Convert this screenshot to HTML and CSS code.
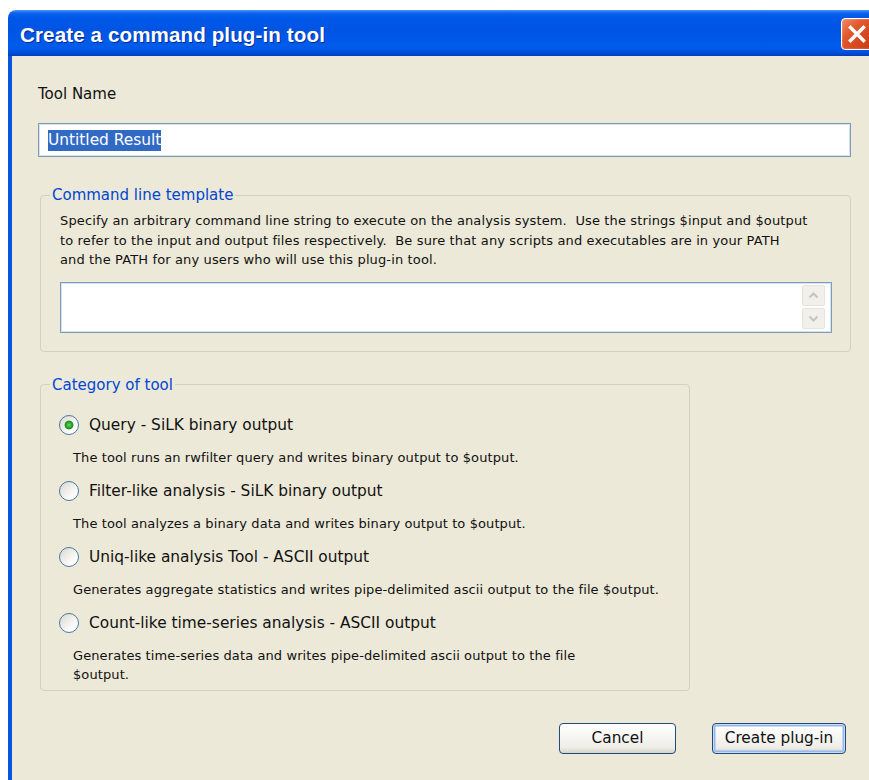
FILE: index.html
```html
<!DOCTYPE html>
<html lang="en">
<head>
<meta charset="utf-8">
<title>Create a command plug-in tool</title>
<link rel="stylesheet" href="styles.css">
</head>
<body>
<div class="window">
  <div class="titlebar">
    <span class="title">Create a command plug-in tool</span>
    <span class="close" aria-label="Close">
      <svg width="30" height="30" viewBox="0 0 30 30"><path d="M8.5 8.5 L21.5 21.5 M21.5 8.5 L8.5 21.5" stroke="#fff" stroke-width="3.4" stroke-linecap="square" fill="none"/></svg>
    </span>
  </div>

  <div class="content">
    <label class="label">Tool Name</label>
    <div class="input"><span class="sel">Untitled Result</span></div>

    <fieldset class="group group-cmd">
      <legend>Command line template</legend>
      <div class="group-body cmd-body">
        <p class="note">Specify an arbitrary command line string to execute on the analysis system.&nbsp; Use the strings $input and $output<br>to refer to the input and output files respectively.&nbsp; Be sure that any scripts and executables are in your PATH<br>and the PATH for any users who will use this plug-in tool.</p>
        <div class="textarea">
          <div class="ta-field"></div>
          <div class="scroll">
            <span class="sbtn"><svg width="11" height="7" viewBox="0 0 11 7"><path d="M1.5 5.5 L5.5 1.5 L9.5 5.5" stroke="#C6C5BC" stroke-width="2" fill="none"/></svg></span>
            <span class="sbtn"><svg width="11" height="7" viewBox="0 0 11 7"><path d="M1.5 1.5 L5.5 5.5 L9.5 1.5" stroke="#C6C5BC" stroke-width="2" fill="none"/></svg></span>
          </div>
        </div>
      </div>
    </fieldset>

    <fieldset class="group group-cat">
      <legend>Category of tool</legend>
      <div class="group-body cat-body">
        <div class="option">
          <div class="opt-row"><span class="radio checked"></span><span class="opt-label">Query - SiLK binary output</span></div>
          <p class="opt-desc">The tool runs an rwfilter query and writes binary output to $output.</p>
        </div>
        <div class="option">
          <div class="opt-row"><span class="radio"></span><span class="opt-label">Filter-like analysis - SiLK binary output</span></div>
          <p class="opt-desc">The tool analyzes a binary data and writes binary output to $output.</p>
        </div>
        <div class="option">
          <div class="opt-row"><span class="radio"></span><span class="opt-label">Uniq-like analysis Tool - ASCII output</span></div>
          <p class="opt-desc">Generates aggregate statistics and writes pipe-delimited ascii output to the file $output.</p>
        </div>
        <div class="option">
          <div class="opt-row"><span class="radio"></span><span class="opt-label">Count-like time-series analysis - ASCII output</span></div>
          <p class="opt-desc multi">Generates time-series data and writes pipe-delimited ascii output to the file<br>$output.</p>
        </div>
      </div>
    </fieldset>

    <div class="buttons">
      <button class="btn btn-cancel" type="button">Cancel</button>
      <button class="btn btn-create default" type="button">Create plug-in</button>
    </div>
  </div>
</div>
</body>
</html>
```

FILE: styles.css
```css
html, body {
  margin: 0;
  padding: 0;
  background: #ffffff;
  height: 780px;
  overflow: hidden;
}

body {
  font-family: "DejaVu Sans", "Liberation Sans", sans-serif;
  color: #111;
}

/* window frame */
.window {
  margin: 10px 0 0 8px;
  width: 869px;
  height: 770px;
  display: flex;
  flex-direction: column;
  border-radius: 8px 8px 0 0;
  overflow: hidden;
}

.titlebar {
  height: 46px;
  flex: none;
  display: flex;
  align-items: center;
  padding: 0 4px 0 12px;
  background: linear-gradient(to bottom,
    #4A96F8 0px, #0D63EE 3px, #0058E8 7px, #0054E3 20px,
    #0058E8 30px, #005CEC 36px, #0055E3 41px, #0047CF 44px, #003DBA 46px);
}

.title {
  font-family: "Liberation Sans", Arial, sans-serif;
  font-weight: bold;
  font-size: 20.6px;
  color: #fff;
  padding-top: 3px;
  text-shadow: 1px 1px 0 #0B2A8E;
  letter-spacing: 0.1px;
}

.close {
  margin-left: auto;
  margin-top: 2px;
  width: 32px;
  height: 32px;
  box-sizing: border-box;
  border: 1px solid #fff;
  border-radius: 4px;
  display: flex;
  align-items: center;
  justify-content: center;
  background: linear-gradient(135deg, #EE8A66 0%, #E2582F 35%, #D8481F 65%, #C23A15 100%);
  box-shadow: inset 0 0 2px rgba(255, 255, 255, 0.5);
}

.content {
  flex: 1;
  background: #ECE9D8;
  border-left: 4px solid #0856E0;
  padding: 28px 26px 0 26px;
}

.label {
  display: block;
  font-size: 15px;
  line-height: 20px;
}

.input {
  margin-top: 19px;
  height: 34px;
  box-sizing: border-box;
  border: 1px solid #7F9DB9;
  box-shadow: inset 0 0 0 1px #D7E1EE;
  background: #fff;
  padding-left: 9px;
  display: flex;
  align-items: center;
}

.sel {
  background: #316AC5;
  color: #fff;
  font-size: 15.4px;
  line-height: 21px;
}

/* group boxes */
.group {
  margin: 0 0 0 2px;
  padding: 0;
  border: 1px solid #D3D0C0;
  border-radius: 4px;
  min-width: 0;
}

.group legend {
  margin-left: 9px;
  padding: 0 2px;
  font-size: 15px;
  line-height: 20px;
  color: #0046D5;
}

.group-cmd {
  margin-top: 28px;
}

.cmd-body {
  padding: 6px 18px 18px 19px;
}

.note {
  margin: 0;
  font-size: 13px;
  letter-spacing: 0.13px;
  line-height: 19.5px;
  white-space: nowrap;
}

.textarea {
  margin-top: 12px;
  height: 51px;
  box-sizing: border-box;
  border: 1px solid #7F9DB9;
  box-shadow: inset 0 0 0 1px #D7E1EE;
  background: #fff;
  display: flex;
}

.ta-field {
  flex: 1;
}

.scroll {
  display: flex;
  flex-direction: column;
  gap: 2px;
  padding: 2px 6px 2px 0;
}

.sbtn {
  width: 23px;
  height: 21px;
  box-sizing: border-box;
  border: 1px solid #E6E4DC;
  border-radius: 2px;
  background: #F1F0EA;
  display: flex;
  align-items: center;
  justify-content: center;
}

.group-cat {
  margin-top: 23px;
  width: 650px;
  box-sizing: border-box;
}

.cat-body {
  padding: 18px 18px 5px 18px;
  display: flex;
  flex-direction: column;
  gap: 11px;
}

.opt-row {
  height: 24px;
  display: flex;
  align-items: center;
  gap: 10px;
}

.radio {
  width: 20px;
  height: 20px;
  box-sizing: border-box;
  border-radius: 50%;
  border: 1.5px solid #4A78A6;
  background: linear-gradient(135deg, #D9D7CE 0%, #F2F1EC 50%, #FFFFFF 80%);
  flex: none;
}

.radio.checked {
  background:
    radial-gradient(circle at 50% 50%, #6FDC6F 0, #2DA82D 2.5px, #1E8E1E 4px, rgba(30, 142, 30, 0) 4.8px),
    linear-gradient(135deg, #D9D7CE 0%, #F2F1EC 50%, #FFFFFF 80%);
}

.opt-label {
  font-size: 15.4px;
  line-height: 20px;
  white-space: nowrap;
}

.opt-desc {
  margin: 11px 0 0 14px;
  font-size: 13px;
  letter-spacing: 0.1px;
  line-height: 20px;
  white-space: nowrap;
}

.opt-desc.multi {
  line-height: 19.5px;
}

/* dialog buttons */
.buttons {
  margin-top: 32px;
  display: flex;
  justify-content: flex-end;
  gap: 36px;
  padding-right: 5px;
}

.btn {
  height: 31px;
  box-sizing: border-box;
  border: 1px solid #1F4C7C;
  border-radius: 4px;
  background: linear-gradient(to bottom, #FFFFFF 0%, #F8F8F5 35%, #EEEDE7 80%, #D8D3C8 100%);
  font-family: "DejaVu Sans", "Liberation Sans", sans-serif;
  font-size: 15.3px;
  color: #111;
  padding: 0;
}

.btn-cancel {
  width: 117px;
}

.btn-create {
  width: 134px;
}

.btn.default {
  box-shadow: inset 0 0 0 1px #C4DAF8, inset 0 0 0 2.5px #98B8EA;
}
```
